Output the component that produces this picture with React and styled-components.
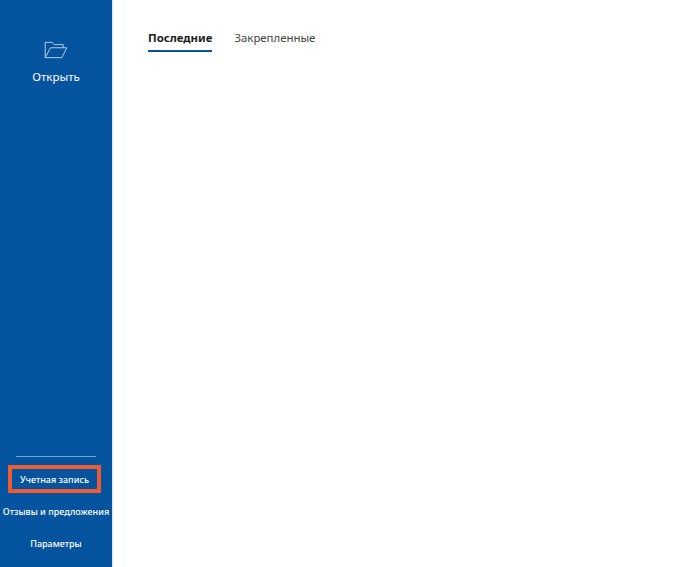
import React from 'react';
import styled, { createGlobalStyle } from 'styled-components';

const GlobalStyle = createGlobalStyle`
  html, body {
    margin: 0;
    padding: 0;
    background: #fff;
  }
  body {
    font-family: "Noto Sans", "Open Sans", sans-serif;
  }
`;

const FolderIcon = () => (
  <svg width="24" height="18" viewBox="0 0 26 20" fill="none" stroke="#b9cde6" strokeWidth="1.1">
    <path d="M1 18.5V1.5h8l2 2.5h10v3.5" />
    <path d="M1 18.5h18.5L25 7.5H7L1 18.5z" />
  </svg>
);

const App = () => (
  <>
    <GlobalStyle />
    <Page>
      <Sidebar>
        <OpenButton>
          <FolderIcon />
          <OpenLabel>Открыть</OpenLabel>
        </OpenButton>
        <BottomNav>
          <Divider />
          <NavItem $highlighted>Учетная запись</NavItem>
          <NavItem>Отзывы и предложения</NavItem>
          <NavItem>Параметры</NavItem>
        </BottomNav>
      </Sidebar>
      <Main>
        <Tabs>
          <Tab $active>Последние</Tab>
          <Tab>Закрепленные</Tab>
        </Tabs>
      </Main>
    </Page>
  </>
);

const Page = styled.div`
  display: flex;
  width: 689px;
  height: 567px;
  overflow: hidden;
`;

const Sidebar = styled.aside`
  width: 113px;
  box-sizing: border-box;
  flex-shrink: 0;
  background: #04539f;
  border-right: 1px solid #d5e3f0;
  display: flex;
  flex-direction: column;
  justify-content: space-between;
  color: #fff;
`;

const OpenButton = styled.div`
  display: flex;
  flex-direction: column;
  align-items: center;
  padding-top: 41px;
  gap: 9px;
`;

const OpenLabel = styled.span`
  font-size: 11.5px;
  line-height: 17px;
`;

const BottomNav = styled.nav`
  display: flex;
  flex-direction: column;
  align-items: center;
  padding-bottom: 8px;
`;

const Divider = styled.div`
  width: 80px;
  height: 1px;
  background: #7fa6cf;
  margin-bottom: 8px;
`;

const NavItem = styled.div`
  box-sizing: border-box;
  width: ${(p) => (p.$highlighted ? '93px' : '112px')};
  height: ${(p) => (p.$highlighted ? '28px' : '32px')};
  margin-bottom: ${(p) => (p.$highlighted ? '2px' : '0')};
  align-self: ${(p) => (p.$highlighted ? 'flex-start' : 'center')};
  margin-left: ${(p) => (p.$highlighted ? '8px' : '0')};
  display: flex;
  align-items: center;
  justify-content: center;
  white-space: nowrap;
  font-size: 9px;
  font-weight: 500;
  border: ${(p) => (p.$highlighted ? '4px solid #ee5a32' : 'none')};
`;

const Main = styled.main`
  flex: 1;
  padding: 29px 35px;
`;

const Tabs = styled.div`
  display: flex;
  gap: 22px;
`;

const Tab = styled.div`
  font-size: 11.4px;
  line-height: 17px;
  padding-bottom: 4px;
  font-weight: ${(p) => (p.$active ? 700 : 400)};
  color: ${(p) => (p.$active ? '#1c1c1c' : '#444')};
  border-bottom: 2px solid ${(p) => (p.$active ? '#0f4fa0' : 'transparent')};
`;

export default App;
